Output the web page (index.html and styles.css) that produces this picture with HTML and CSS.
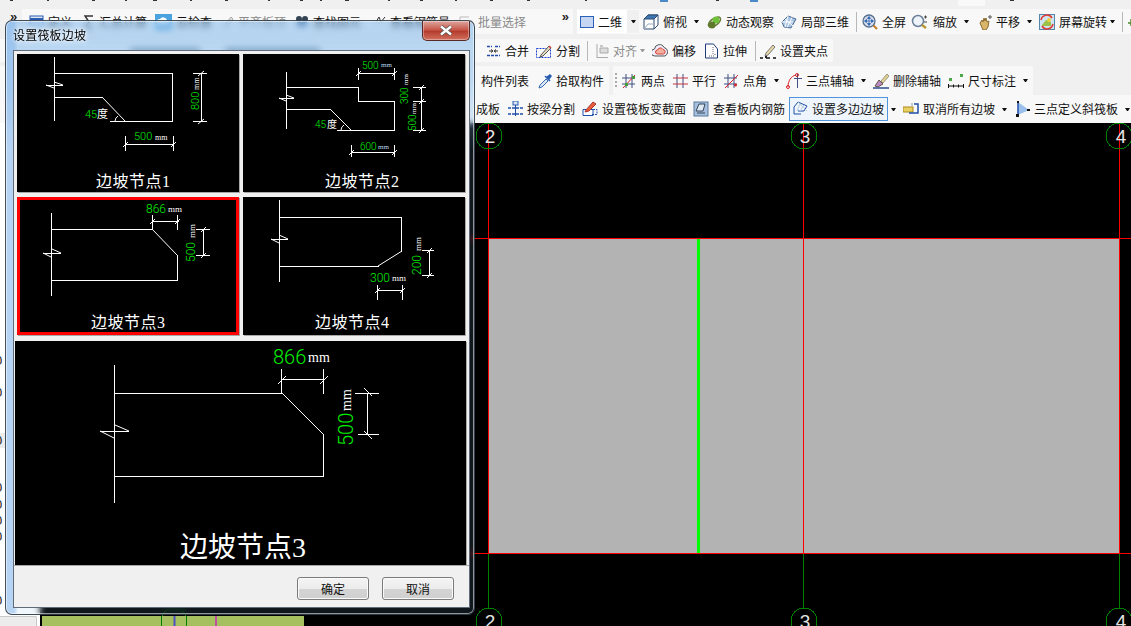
FILE: index.html
```html
<!DOCTYPE html>
<html lang="zh-CN">
<head>
<meta charset="utf-8">
<title>设置筏板边坡</title>
<link rel="stylesheet" href="styles.css">
</head>
<body>
<div class="app">
  <div class="topstrip">
    <svg width="1131" height="9" viewBox="0 0 1131 9">
      <rect x="958" y="0" width="27" height="6" fill="#f9f9f9"/>
      <path class="frag" d="M10 .5h3M47 .5h2M92 .5h3M125 .5h2M153 .5h4M190 .5h2M225 .5h3M268 .5h2M300 .5h3M320 .5h2M345 .5h4M388 .5h2M420 .5h3M455 .5h2M490 .5h3M527 .5h3M585 .5h2M716 .5h3M1010 .5h4"/>
      <path class="fragb" d="M660 1h8M750 1h8"/>
    </svg>
  </div>

  <div class="row row1">
    <span class="more first">»</span>
    <div class="band grow">
      <div class="tool m7"><svg width="15" height="16" viewBox="0 0 15 16"><rect x="1" y="2" width="13" height="12" fill="#dfe8f5" stroke="#2a5db0"/><path d="M1 5h13" stroke="#2a5db0" stroke-width="2"/></svg><span>定义</span></div>
      <div class="tool m12"><svg width="11" height="16" viewBox="0 0 11 16"><path d="M9 2H1l4 6-4 6h8" fill="none" stroke="#333" stroke-width="1.5"/></svg><span>汇总计算</span></div>
      <div class="tool m8"><svg width="17" height="16" viewBox="0 0 17 16"><rect x="0" y="0" width="17" height="16" fill="#4aa3df"/><path d="M4 11a3 3 0 0 1 1-6 4 4 0 0 1 7 1 2.500 2.500 0 0 1 0 5z" fill="#fff"/></svg><span>云检查</span></div>
      <div class="tool m10 off"><svg width="12" height="16" viewBox="0 0 12 16"><path d="M2 12 9 3l2 2-7 9H2z" fill="#ddd" stroke="#aaa"/></svg><span>平齐板顶</span></div>
      <div class="tool m9"><svg width="14" height="16" viewBox="0 0 14 16"><circle cx="4" cy="5" r="3" fill="#345"/><circle cx="10" cy="5" r="3" fill="#345"/><rect x="2" y="8" width="10" height="5" fill="#57a"/></svg><span>查找图元</span></div>
      <div class="tool m14"><svg width="11" height="16" viewBox="0 0 11 16"><path d="M1 8l3-5 2 5 4-5" fill="none" stroke="#333"/></svg><span>查看钢筋量</span></div>
      <div class="tool m8 off"><svg width="16" height="16" viewBox="0 0 16 16"><path d="M2 3h9M2 3v10M6 7h8v6H6z" fill="none" stroke="#bbb"/></svg><span>批量选择</span></div>
      <span class="more auto">»</span>
    </div>
    <div class="band grow second">
      <div class="dual">
        <div class="tool"><svg width="14" height="16" viewBox="0 0 14 16"><rect x=".5" y="2.500" width="13" height="11" fill="#c4d6f2" stroke="#2b62b8"/></svg><span>二维</span></div>
        <div class="dualcaret"><i class="caret"></i></div>
      </div>
      <div class="tool m4"><svg width="16" height="16" viewBox="0 0 16 16"><path d="M1 5 5 1h10v10l-4 4H1z" fill="#fff" stroke="#2c4a6e"/><path d="M1 5 5 1h10l-4 4z" fill="#3d78b5" stroke="#2c4a6e"/><path d="M11 5v10M11 5l4-4" stroke="#2c4a6e" fill="none"/><path d="M1 15l4-5h6" stroke="#9ab" fill="none"/></svg><span>俯视</span></div>
      <i class="caret m7"></i>
      <div class="tool m8"><svg width="15" height="16" viewBox="0 0 15 16"><ellipse cx="7.500" cy="8" rx="7" ry="3.500" transform="rotate(-35 7.500 8)" fill="none" stroke="#6a7a3a" stroke-width="1.500"/><circle cx="9" cy="6" r="3.500" fill="#6fc13a"/><circle cx="5" cy="11" r="3.500" fill="#5d7a2a"/></svg><span>动态观察</span></div>
      <div class="tool m7"><svg width="16" height="16" viewBox="0 0 16 16"><path d="M1 8l6-6 8 3-5 9-7-1z" fill="#a8c4e4" stroke="#4a6a90"/><path d="M4 5l8 7M7 2l-3 11M11 3.500 6 13.500M1 8l11 0" stroke="#fff"/></svg><span>局部三维</span></div>
      <i class="sep m7"></i>
      <div class="tool m5"><svg width="16" height="16" viewBox="0 0 16 16"><circle cx="7" cy="7" r="6" fill="#d5dfec" stroke="#56708f" stroke-width="1.300"/><path d="M7 3v8M3 7h8M7 2.500 5.500 4.500h3zM7 11.500l-1.500-2h3zM2.500 7l2-1.500v3zM11.500 7l-2-1.500v3z" stroke="#2b5fb0" fill="#2b5fb0" stroke-width=".7"/><path d="M11.500 11.500 15 15" stroke="#c87a20" stroke-width="2"/></svg><span>全屏</span></div>
      <div class="tool m3"><svg width="20" height="16" viewBox="0 0 20 16"><circle cx="9" cy="7" r="5.500" fill="#eef3f9" stroke="#6a7f99" stroke-width="1.500"/><path d="M13 11l4 3" stroke="#b8952a" stroke-width="2.200"/><path d="M15 3h3M16.500 1.500v3M15 8h3" stroke="#444"/></svg><span>缩放</span></div>
      <i class="caret m7"></i>
      <div class="tool m9"><svg width="14" height="16" viewBox="0 0 14 16"><path d="M2 9l2-3 1 2 1-4 1 3 1-3 1 4 2-1-1 6-2 3H5z" fill="#d9b56c" stroke="#8b6b2c"/><path d="M10 3h4M12 1v4" stroke="#555"/></svg><span>平移</span></div>
      <i class="caret m7"></i>
      <div class="tool m7"><svg width="16" height="16" viewBox="0 0 16 16"><rect x=".5" y=".5" width="15" height="15" fill="#cfe4f4" stroke="#58a"/><path d="M3 11l4-5 5 2v4H3z" fill="#9cc24a"/><circle cx="10" cy="6" r="2" fill="#f0d040"/><path d="M2 6a6 6 0 0 1 11-2M14 10a6 6 0 0 1-11 2" fill="none" stroke="#e03a30" stroke-width="1.500"/></svg><span>屏幕旋转</span></div>
      <i class="caret m3"></i>
      <i class="sep m7"></i>
      <svg class="m5" width="6" height="16" viewBox="0 0 6 16"><path d="M3 5v7M0 9h6" stroke="#4a8a2a" stroke-width="1.500"/></svg>
    </div>
  </div>

  <div class="row row2">
    <div class="band pad2">
      <i class="smudge s1"></i><i class="smudge s2"></i>
      <div class="tool"><svg width="15" height="16" viewBox="0 0 15 16"><path d="M1 3.500h5M9 3.500h5M1 12.500h13" stroke="#1f4fa8" stroke-width="1.500" stroke-dasharray="3 1"/><path d="M3 8h3.500M12 8H8.500M5 6.500 7 8 5 9.500M10 6.500 8 8l2 1.500" stroke="#333" fill="none"/></svg><span>合并</span></div>
      <div class="tool m7"><svg width="16" height="16" viewBox="0 0 16 16"><rect x=".5" y="5.500" width="14" height="9" fill="none" stroke="#1b3fd0" stroke-dasharray="2 1"/><path d="M5 12 13 3l2 2-8 8-3 1z" fill="#e8dcc0" stroke="#555"/><path d="M13 3l2 2" stroke="#c33" stroke-width="1.500"/></svg><span>分割</span></div>
      <i class="sep m7"></i>
      <div class="tool m7 off"><svg width="14" height="16" viewBox="0 0 14 16"><path d="M2 1v14M2 14.500h11M5 5h8v5H5z" fill="#ddd" stroke="#aaa"/><path d="M5 3h3" stroke="#999"/></svg><span>对齐</span></div>
      <i class="caret m3 dim"></i>
      <div class="tool m7"><svg width="16" height="16" viewBox="0 0 16 16"><path d="M3 13a3.500 3.500 0 0 1-.5-7A5 5 0 0 1 12 4.500a4.500 4.500 0 0 1 1 8.500z" fill="#eef" stroke="#555"/><path d="M5.500 11a2 2 0 0 1 0-4A3 3 0 0 1 11 6.500a2.300 2.300 0 0 1 .5 4.500z" fill="#f3b0a0" stroke="#d8402f"/></svg><span>偏移</span></div>
      <div class="tool m8"><svg width="15" height="16" viewBox="0 0 15 16"><path d="M1.500 1h8l4 5v9h-12z" fill="#fff" stroke="#1f3c78"/><path d="M9 4v7M11 11v2M5 13h6" stroke="#667" stroke-dasharray="1 1"/></svg><span>拉伸</span></div>
      <i class="sep m8"></i>
      <div class="tool m4"><svg width="16" height="16" viewBox="0 0 16 16"><path d="M6 10 13 2l2 2-7 8-3 1z" fill="#e8d8a8" stroke="#777"/><path d="M0 15h3M6 15h4M13 15h3" stroke="#111" stroke-width="1.500"/><path d="M5 13h2v2H5z" fill="#222"/></svg><span>设置夹点</span></div>
    </div>
  </div>

  <div class="row row3">
    <div class="band pad3">
      <div class="tool"><span>构件列表</span></div>
      <div class="tool m9"><svg width="14" height="16" viewBox="0 0 14 16"><path d="M1 15l1-3 6-6 2 2-6 6z" fill="#d8e6f6" stroke="#3a6db5"/><path d="M8 4l4-3 2 2-3 4z" fill="#2a5db0"/><path d="M7 3l5 5" stroke="#2a5db0" stroke-width="1.500"/></svg><span>拾取构件</span></div>
    </div>
    <div class="band bandgap">
      <i class="grip"></i>
      <div class="tool m5"><svg width="15" height="16" viewBox="0 0 15 16"><path d="M0 5h13M0 11h13M4 1v14M10 1v14" stroke="#3f4f83"/><path d="M1 15 13 2" stroke="#d8242a"/><rect x="3" y="10" width="3" height="3" fill="#4a9a3a"/><rect x="10" y="3" width="3" height="3" fill="#4a9a3a"/></svg><span>两点</span></div>
      <div class="tool m8"><svg width="15" height="16" viewBox="0 0 15 16"><path d="M4 1v14M10 1v14" stroke="#3f4f83"/><path d="M0 5h15M0 11h15" stroke="#c8323c"/></svg><span>平行</span></div>
      <div class="tool m8"><svg width="15" height="16" viewBox="0 0 15 16"><path d="M0 5h13M0 11h13M4 1v14M10 1v14" stroke="#3f4f83"/><path d="M1 15 14 2" stroke="#d8242a"/><circle cx="11.500" cy="12" r="1.500" fill="#d8242a"/></svg><span>点角</span></div>
      <i class="caret m7"></i>
      <div class="tool m7"><svg width="16" height="16" viewBox="0 0 16 16"><path d="M8 5.500h8M11.500 1v14" stroke="#3f4f83"/><path d="M2 14C2 8 5 3 10 2" fill="none" stroke="#d8242a"/><circle cx="2" cy="14" r="1.500" fill="none" stroke="#d8242a"/><circle cx="11" cy="2" r="1.500" fill="none" stroke="#d8242a"/></svg><span>三点辅轴</span></div>
      <i class="caret m7"></i>
      <div class="tool m7"><svg width="16" height="16" viewBox="0 0 16 16"><path d="M8 8l6-7 2 2-6 7z" fill="#e6d090" stroke="#998"/><path d="M2 13l4-6 4 4-5 3z" fill="#b98ac8" stroke="#654"/><path d="M0 15h16" stroke="#2b4f8c" stroke-width="1.500"/></svg><span>删除辅轴</span></div>
      <div class="tool m7"><svg width="16" height="16" viewBox="0 0 16 16"><rect x="1" y="5" width="3" height="3" fill="#4aa84a"/><rect x="12" y="1" width="3" height="3" fill="#4aa84a"/><path d="M.5 11v4M15.500 11v4M1 13h14" stroke="#111"/><path d="M5 13h1M10 13h1" stroke="#111" stroke-width="3"/></svg><span>尺寸标注</span></div>
      <i class="caret m7"></i>
    </div>
  </div>

  <div class="row row4">
    <div class="tool"><span>成板</span></div>
    <div class="tool m8"><svg width="15" height="16" viewBox="0 0 15 16"><rect x="5" y="0" width="5" height="4" fill="#d8e4f4" stroke="#2a5db0"/><path d="M0 7h15M0 13h15" stroke="#1f4fa8" stroke-width="1.500" stroke-dasharray="3 1"/><path d="M7.500 4v11" stroke="#1f4fa8"/></svg><span>按梁分割</span></div>
    <div class="tool m7"><svg width="16" height="16" viewBox="0 0 16 16"><path d="M1 8.500h10v6H1z" fill="#fff" stroke="#1f4fa8"/><path d="M5 8.500h10v5H9" fill="none" stroke="#1f4fa8" stroke-dasharray="2 1"/><path d="M4 9l7-8 3 2-7 7-4 1z" fill="#e8603a" stroke="#a33"/></svg><span>设置筏板变截面</span></div>
    <div class="tool m7"><svg width="16" height="16" viewBox="0 0 16 16"><rect x="1" y="1" width="14" height="14" fill="#a8c0e0" stroke="#5a7a9a"/><path d="M3 10l3-7h6l-2 7z" fill="#dfe8f5" stroke="#345"/><path d="M4 12h8" stroke="#345"/></svg><span>查看板内钢筋</span></div>
    <div class="tool m4 selected"><svg width="15" height="16" viewBox="0 0 15 16"><path d="M1 13h7M1 13V6l4-5 9 4-3 5H5" fill="none" stroke="#1f4fa8"/><path d="M5 1l9 9M7 3l-3 7M11 4l-4 6" stroke="#bcd" fill="none"/></svg><span>设置多边边坡</span></div>
    <i class="caret m3"></i>
    <div class="tool m7"><svg width="16" height="16" viewBox="0 0 16 16"><rect x="0" y="6" width="10" height="5" fill="#ead062" stroke="#a88a20"/><path d="M11 3h4v9H6" fill="none" stroke="#1f4fa8" stroke-width="1.500"/><path d="M8 2h2v3H8z" fill="#bcd"/></svg><span>取消所有边坡</span></div>
    <i class="caret m7"></i>
    <div class="tool m9"><svg width="14" height="16" viewBox="0 0 14 16"><path d="M2 1v13l11-5z" fill="#9cc0ec"/><path d="M2 1v13h0" stroke="#1f4fa8" stroke-width="1.500"/><rect x="0" y="13" width="3" height="3" fill="#111"/><rect x="1" y="0" width="2" height="2" fill="#111"/><rect x="11" y="8" width="3" height="2" fill="#111"/></svg><span>三点定义斜筏板</span></div>
    <i class="caret m7"></i>
  </div>

  <div class="main">
    <div class="side">
      <svg width="40" height="503" viewBox="0 123 40 503">
        <rect x="0" y="433" width="5" height="15" fill="#ececec"/>
        <rect x="0" y="617" width="36" height="9" fill="#ececec"/>
        <path d="M0 616.500h36M36.500 616.500v10" stroke="#c8c8c8" fill="none"/>
        <g class="sidenum">
          <text x="-5" y="365">0</text><text x="-5" y="397">0</text><text x="-5" y="445">0</text><text x="-5" y="492">0</text><text x="-5" y="509">0</text><text x="-5" y="525">0</text><text x="-5" y="541">0</text><text x="-5" y="605">0</text>
        </g>
      </svg>
    </div>
    <svg class="canvas" width="1091" height="503" viewBox="40 123 1091 503">
      <rect x="40" y="123" width="1091" height="503" fill="#000"/>
      <rect x="42" y="616" width="262" height="10" fill="#a6c060"/>
      <path d="M174.500 616v10" stroke="#4a50c0" stroke-width="2"/>
      <path d="M216 616v10" stroke="#c050a0" stroke-width="2"/>
      <circle cx="174" cy="621" r="13" class="ring"/>
      <rect x="488.500" y="238.500" width="630.500" height="315" fill="#b3b3b3"/>
      <path class="grn" d="M488.500 553v55M803.500 553v55M1119.500 553v55"/>
      <path class="red" d="M40 238.500h1091M40 553.500h1091M488.500 123v431M803.500 123v431M1119.500 123v431"/>
      <path d="M698 239v314" stroke="#00ff00" stroke-width="3" shape-rendering="crispEdges"/>
      <circle cx="489" cy="136" r="13" class="ring"/>
      <circle cx="804" cy="136" r="13" class="ring"/>
      <circle cx="1119" cy="136" r="13" class="ring"/>
      <circle cx="489" cy="621" r="13" class="ring"/>
      <circle cx="804" cy="621" r="13" class="ring"/>
      <circle cx="1119" cy="621" r="13" class="ring"/>
      <g class="axis">
        <text x="490" y="143">2</text><text x="805" y="143">3</text><text x="1121" y="143">4</text>
        <text x="490" y="628">2</text><text x="805" y="628">3</text><text x="1121" y="628">4</text>
      </g>
    </svg>
  </div>
</div>

<section class="dialog">
  <header class="dlg-title">
    <h1>设置筏板边坡</h1>
    <button class="close" type="button"><svg width="16" height="11" viewBox="0 0 16 11"><path d="M3 1.500 13 9.500M13 1.500 3 9.500" stroke="#555" stroke-width="4"/><path d="M3 1.500 13 9.500M13 1.500 3 9.500" stroke="#fff" stroke-width="2.400"/></svg></button>
  </header>
  <div class="dlg-body">
    <div class="grid">
      <figure class="thumb">
        <svg width="222" height="138" viewBox="17 54 222 138">
          <path class="ln" d="M54.500 57v64M54.500 73.500h118M172.500 73.500v48M110 121.500h63M54.500 97.500h48"/>
          <path class="dg" d="M102 97 125 121"/>
          <path class="ln" d="M46 85.500h17"/><path class="dg" d="M46 85l8 3M54 82l9 3"/>
          <path class="ln" d="M201.500 73v48M193 73.500h14M193 121.500h14M125.500 144.500h48M125.500 136v15M173.500 136v15"/>
          <path class="dg" d="M198 76l6-5M198 124l6-5M123 147l5-5M171 147l5-5M115 121a7 7 0 0 1 3-5"/>
          <text class="g" x="85" y="118" font-size="11">45</text><text class="wc" x="97" y="118" font-size="11">度</text>
          <text class="g" x="134" y="140" font-size="11">500</text><text class="w" x="155" y="140" font-size="8">mm</text>
          <text class="g" font-size="11" transform="translate(199 110) rotate(-90)">800</text>
          <text class="w" font-size="8" transform="translate(199 90) rotate(-90)">mm</text>
          <text class="lab" x="96" y="187">边坡节点1</text>
        </svg>
      </figure>
      <figure class="thumb">
        <svg width="222" height="138" viewBox="243 54 222 138">
          <path class="ln" d="M286.500 72v57M286.500 87.500h72M358.500 87.500v14M358.500 101.500h36M394.500 101.500v29M337 130.500h58M286.500 109.500h44"/>
          <path class="dg" d="M330 109 351 130"/>
          <path class="ln" d="M279 98.500h15"/><path class="dg" d="M279 98l7 3M286 95l8 3"/>
          <path class="ln" d="M358.500 68v12M394.500 68v12M358.500 73.500h36M421.500 87v43M413 87.500h13M413 101.500h13M413 130.500h13M351 152.500h44M351.500 145v12M394.500 145v12"/>
          <path class="dg" d="M356 76l5-5M392 76l5-5M419 90l5-5M419 104l5-5M419 133l5-5M349 155l5-5M392 155l5-5M341 130a6 6 0 0 1 3-5"/>
          <text class="g" x="315" y="128" font-size="10">45</text><text class="wc" x="327" y="128" font-size="10">度</text>
          <text class="g" x="362" y="69" font-size="10">500</text><text class="b" x="381" y="67" font-size="7">mm</text>
          <text class="g" x="360" y="150" font-size="10">600</text><text class="b" x="378" y="149" font-size="7">mm</text>
          <text class="g" font-size="10" transform="translate(408 104) rotate(-90)">300</text>
          <text class="w" font-size="7" transform="translate(408 85) rotate(-90)">mm</text>
          <text class="g" font-size="10" transform="translate(416 131) rotate(-90)">500</text>
          <text class="w" font-size="7" transform="translate(416 114) rotate(-90)">mm</text>
          <text class="lab" x="325" y="187">边坡节点2</text>
        </svg>
      </figure>
      <figure class="thumb sel">
        <svg width="222" height="138" viewBox="17 197 222 138">
          <path class="ln" d="M51.500 213v83M51.500 229.500h101M177.500 255v26M51.500 280.500h126"/>
          <path class="dg" d="M152 229 177 255"/>
          <path class="ln" d="M43 253.500h18"/><path class="dg" d="M43 253l8 4M52 249l9 4"/>
          <path class="ln" d="M152.500 215v14M177.500 215v15M152.500 221.500h26M203.500 229v26M196 229.500h14M196 255.500h14"/>
          <path class="dg" d="M150 224l5-5M175 224l5-5M201 232l5-5M201 258l5-5"/>
          <text class="g" x="146" y="213" font-size="12">866</text><text class="w" x="168" y="212" font-size="9">mm</text>
          <text class="g" font-size="12" transform="translate(195 262) rotate(-90)">500</text>
          <text class="w" font-size="9" transform="translate(195 238) rotate(-90)">mm</text>
          <text class="lab" x="91" y="328">边坡节点3</text>
        </svg>
      </figure>
      <figure class="thumb">
        <svg width="222" height="138" viewBox="243 197 222 138">
          <path class="ln" d="M279.500 200v82M279.500 217.500h122M401.500 217.500v34M279.500 266.500h99"/>
          <path class="dg" d="M402 251 378 266"/>
          <path class="ln" d="M271 239.500h17"/><path class="dg" d="M271 239l8 4M279 235l9 4"/>
          <path class="ln" d="M429.500 250v26M422 250.500h12M422 275.500h12M377.500 285v15M402.500 285v15M377 290.500h26"/>
          <path class="dg" d="M427 253l5-5M427 278l5-5M375 293l5-5M400 293l5-5"/>
          <text class="g" x="370" y="282" font-size="12">300</text><text class="w" x="392" y="281" font-size="9">mm</text>
          <text class="g" font-size="12" transform="translate(421 275) rotate(-90)">200</text>
          <text class="w" font-size="9" transform="translate(421 251) rotate(-90)">mm</text>
          <text class="lab" x="315" y="328">边坡节点4</text>
        </svg>
      </figure>
    </div>
    <figure class="large">
      <svg width="451" height="224" viewBox="15 341 451 224">
        <path class="ln" d="M114.500 365v138M114.500 393.500h167M323.500 434v43M114.500 476.500h209"/>
        <path class="dg" d="M282 393 323 434"/>
        <path class="ln" d="M100 431.500h29"/><path class="dg" d="M100 431l14 7M115 425l14 6"/>
        <path class="ln" d="M281.500 369v24M323.500 369v25M281.500 379.500h42M367.500 393v41M355 393.500h24M358 434.500h21"/>
        <path class="dg" d="M278 384l8-8M320 384l8-8M364 388l8 8M364 431l8 8"/>
        <text class="g" x="273" y="364" font-size="20">866</text><text class="w" x="308" y="362" font-size="14">mm</text>
        <text class="g" font-size="20" transform="translate(353 446) rotate(-90)">500</text>
        <text class="w" font-size="14" transform="translate(351 411) rotate(-90)">mm</text>
        <text class="labbig" x="180" y="557">边坡节点3</text>
      </svg>
    </figure>
    <footer class="dlg-foot">
      <button type="button" class="btn">确定</button>
      <button type="button" class="btn">取消</button>
    </footer>
  </div>
</section>
</body>
</html>
```

FILE: styles.css
```css
* { box-sizing: border-box; }
html, body { margin: 0; padding: 0; }
body {
  width: 1131px;
  height: 626px;
  overflow: hidden;
  position: relative;
  background: #f0f0f0;
  font: 12px/16px "Noto Sans CJK SC", "Liberation Sans", sans-serif;
  color: #111;
}
svg { display: block; flex: none; }
.app { display: flex; flex-direction: column; height: 626px; }

.topstrip { height: 9px; flex: none; }
.frag { stroke: #333; stroke-width: 1; fill: none; }
.fragb { stroke: #4a8ac8; stroke-width: 2; fill: none; }

.row { display: flex; align-items: stretch; flex: none; }
.row1 { height: 25px; }
.row2 { height: 23px; margin-top: 5px; }
.row3 { height: 29px; margin-top: 4px; }
.row4 { height: 28px; background: #f8f8f8; padding-left: 476px; align-items: center; }

.band { display: flex; align-items: center; background: #f8f8f8; }
.grow { flex: none; }
.row1 .grow { width: 551px; }
.row1 .second { width: 554px; margin-left: 4px; overflow: hidden; }
.pad2 { padding: 0 5px 0 486px; position: relative; }
.pad3 { padding: 0 5px 0 481px; }
.bandgap { margin-left: 4px; padding: 0 5px 0 2px; }

.more { font: bold 13px/12px "Liberation Sans", sans-serif; color: #222; align-self: flex-start; }
.first { width: 22px; padding-left: 10px; margin-top: 2px; }
.auto { margin-left: auto; margin-right: 4px; margin-top: 2px; }

.tool { display: flex; align-items: center; gap: 4px; white-space: nowrap; flex: none; }
.off { color: #8a8a8a; }
.m3 { margin-left: 3px; } .m4 { margin-left: 4px; } .m5 { margin-left: 5px; }
.m7 { margin-left: 7px; } .m8 { margin-left: 8px; } .m9 { margin-left: 9px; }
.m10 { margin-left: 10px; } .m12 { margin-left: 12px; } .m14 { margin-left: 14px; }

.caret {
  display: block; flex: none; width: 5px; height: 3px;
  border-left: 2.5px solid transparent; border-right: 2.5px solid transparent;
  border-top: 3px solid #111;
}
.caret.dim { border-top-color: #999; }
.sep { display: block; flex: none; width: 1px; height: 20px; background: #b8b8b8; }
.grip { display: block; flex: none; width: 2px; height: 16px; background: repeating-linear-gradient(#aaa 0 2px, transparent 2px 4px); }
.dual { display: flex; height: 23px; background: #fff; padding-left: 3px; align-items: center; width: 62px; }
.dualcaret { margin-left: 5px; width: 12px; height: 23px; background: #f0f0f0; display: flex; align-items: center; justify-content: center; }
.selected { height: 24px; padding: 0 3px; border: 1px solid #4f94dc; background: #eef5fc; }
.smudge { position: absolute; top: 9px; height: 5px; background: #6a7f95; }
.s1 { left: 130px; width: 70px; }
.s2 { left: 225px; width: 95px; }

.main { display: flex; flex: 1; min-height: 0; }
.side { width: 40px; flex: none; background: #fff; }
.sidenum text { font: 13px "Liberation Sans", sans-serif; fill: #222; }
.red { stroke: #ff0000; stroke-width: 1; fill: none; shape-rendering: crispEdges; }
.grn { stroke: #008000; stroke-width: 1; fill: none; shape-rendering: crispEdges; }
.ring { fill: none; stroke: #008000; stroke-width: 1; shape-rendering: crispEdges; }
.axis text { font: 19px "Liberation Sans Narrow", "Liberation Sans", sans-serif; fill: #e4e4e4; text-anchor: middle; }

/* dialog: a window floating above the application */
.dialog {
  position: absolute; left: 5px; top: 20px; width: 470px; height: 595px;
  display: flex; flex-direction: column;
  border: 1px solid rgba(40, 50, 60, .85);
  border-radius: 7px;
  box-shadow: inset 0 0 0 1px rgba(255, 255, 255, .55);
  -webkit-backdrop-filter: blur(3px);
  backdrop-filter: blur(3px);
  background:
    linear-gradient(90deg, rgba(130, 180, 235, .55) 0, rgba(130, 180, 235, .5) 8px, rgba(130, 180, 235, 0) 12px),
    linear-gradient(180deg, rgba(130, 185, 235, .55) 0, rgba(130, 185, 235, .5) 60px, rgba(130, 185, 235, .12) 130px);
}
.dlg-title { height: 29px; flex: none; display: flex; justify-content: space-between; align-items: flex-start; padding-left: 7px; }
.dlg-title h1 { margin: 6px 0 0; font-size: 12px; line-height: 16px; font-weight: 400; color: #000; letter-spacing: .2px; text-shadow: 0 0 5px #fff, 0 0 5px #fff; }
.close {
  width: 48px; height: 20px; margin: 0 4px 0 0; padding: 0;
  display: flex; align-items: center; justify-content: center;
  border: 1px solid #5a2a26; border-top: 0; border-radius: 0 0 5px 5px;
  background: linear-gradient(#dda79f 0, #c9594c 45%, #b53d2e 55%, #d2705f 100%);
  box-shadow: inset 0 0 0 1px rgba(255, 255, 255, .35);
}
.dlg-body {
  margin-left: 7px; width: 457px; height: 558px; flex: none;
  display: flex; flex-direction: column;
  background: #f0f0f0;
  border: 1px solid #5f6b78;
  padding-top: 3px;
}
.grid { display: grid; grid-template-columns: 222px 222px; grid-template-rows: 138px 138px; column-gap: 4px; row-gap: 5px; margin-left: 3px; }
.thumb, .large { margin: 0; background: #000; position: relative; box-shadow: 1px 1px 0 #a8a8a8; }
.sel { outline: 3px solid #ff0000; outline-offset: -3px; }
.large { width: 451px; height: 224px; margin: 6px 0 0 1px; flex: none; }
.ln { stroke: #fff; stroke-width: 1; fill: none; shape-rendering: crispEdges; }
.dg { stroke: #fff; stroke-width: 1; fill: none; }
.g { fill: #00f000; font-family: Roboto, "Liberation Sans", sans-serif; font-weight: 300; }
.w { fill: #fff; font-family: "Liberation Serif", serif; }
.b { fill: #b8d8f0; font-family: "Liberation Serif", serif; }
.wc { fill: #fff; font-family: "Noto Sans CJK SC", sans-serif; }
.lab { fill: #fff; font: 16px "Liberation Serif", "Noto Sans CJK SC", serif; letter-spacing: .5px; }
.labbig { fill: #fff; font: 28px "Liberation Serif", "Noto Sans CJK SC", serif; }
.dlg-foot { flex: 1; display: flex; justify-content: flex-end; gap: 13px; padding: 11px 15px 0 0; border-top: 1px solid #a8a8a8; }
.btn {
  width: 72px; height: 23px; padding: 0;
  font: 12px/16px "Noto Sans CJK SC", sans-serif; color: #111;
  border: 1px solid #7a7a7a; border-radius: 3px;
  background: linear-gradient(#f4f4f4 0, #ececec 50%, #d4d4d4 51%, #cfcfcf 100%);
  box-shadow: inset 0 0 0 1px #fbfbfb;
}
```
